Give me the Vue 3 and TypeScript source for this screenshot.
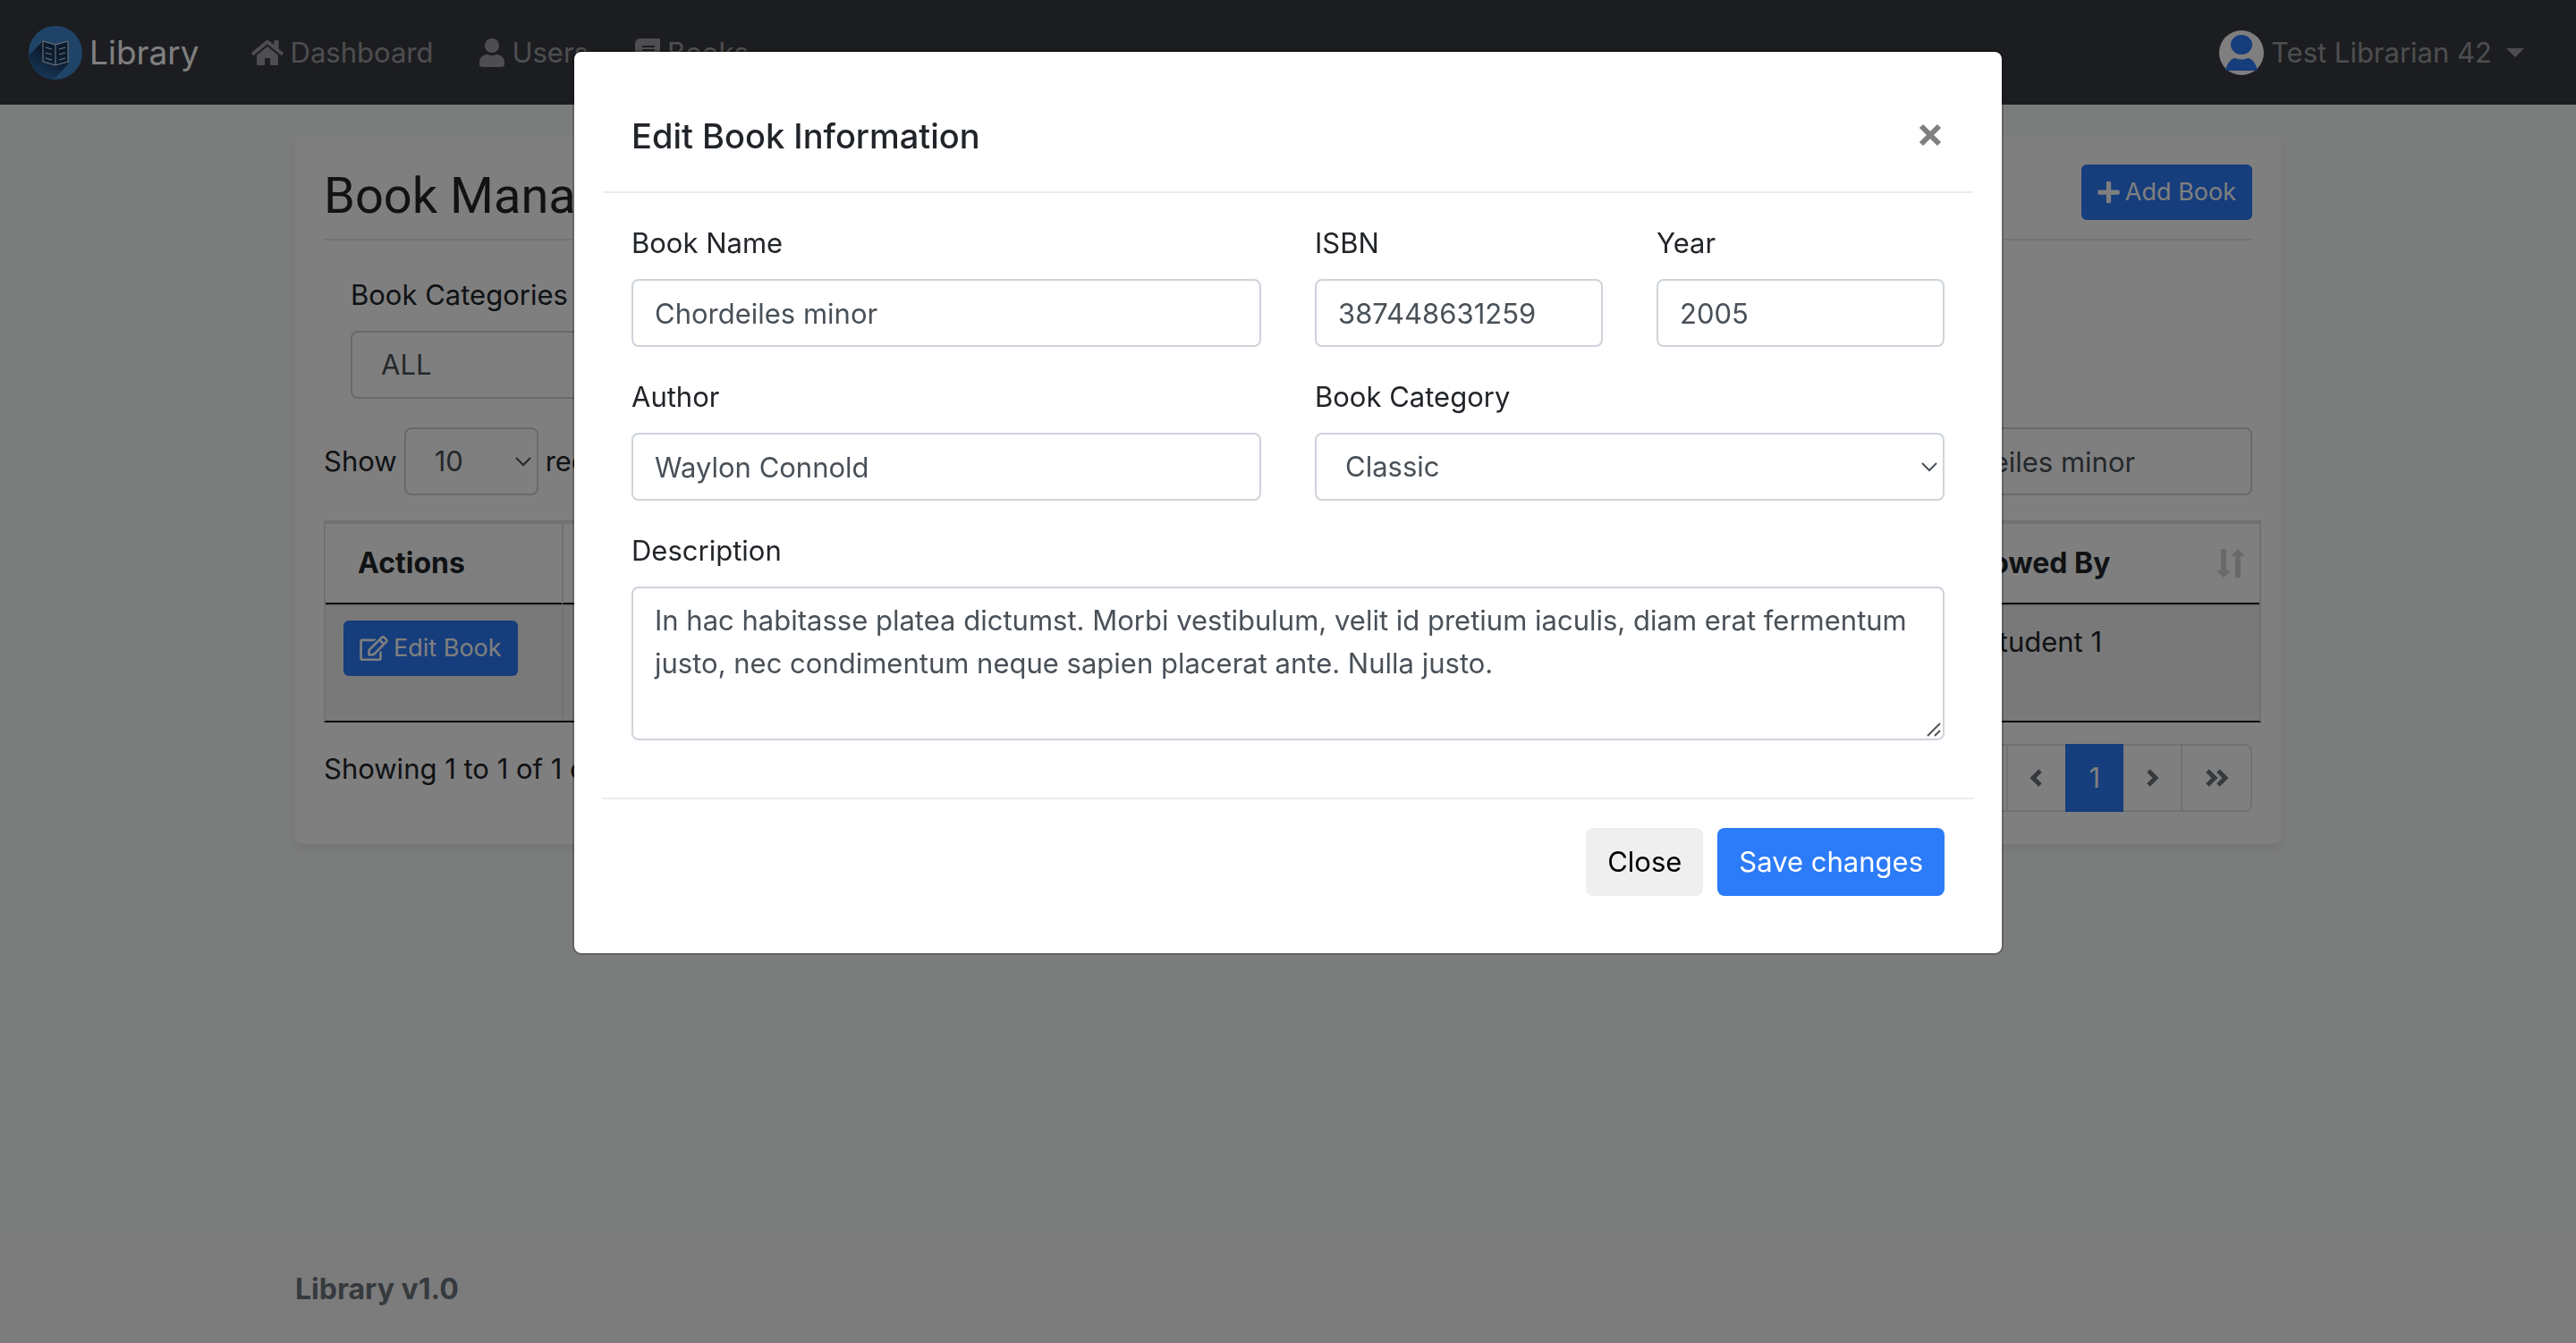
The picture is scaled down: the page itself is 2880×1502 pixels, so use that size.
<script setup lang="ts">
import { ref } from 'vue'

interface NavItem {
  label: string
  viewBox: string
  width: number
  path: string
}

const navItems: NavItem[] = [
  {
    label: 'Dashboard',
    viewBox: '0 0 576 512',
    width: 36,
    path: 'M280.37 148.26L96 300.11V464a16 16 0 0 0 16 16l112.06-.29a16 16 0 0 0 15.92-16V368a16 16 0 0 1 16-16h64a16 16 0 0 1 16 16v95.64a16 16 0 0 0 16 16.05L464 480a16 16 0 0 0 16-16V300L295.67 148.26a12.19 12.19 0 0 0-15.3 0zM571.6 251.47L488 182.56V44.05a12 12 0 0 0-12-12h-56a12 12 0 0 0-12 12v72.61L318.47 43a48 48 0 0 0-61 0L4.34 251.47a12 12 0 0 0-1.6 16.9l25.5 31A12 12 0 0 0 45.15 301l235.22-193.74a12.19 12.19 0 0 1 15.3 0L530.9 301a12 12 0 0 0 16.9-1.6l25.5-31a12 12 0 0 0-1.7-16.93z',
  },
  {
    label: 'Users',
    viewBox: '0 0 448 512',
    width: 28,
    path: 'M224 256c70.7 0 128-57.3 128-128S294.7 0 224 0 96 57.3 96 128s57.3 128 128 128zm89.6 32h-16.7c-22.2 10.2-46.9 16-72.9 16s-50.6-5.8-72.9-16h-16.7C60.2 288 0 348.2 0 422.4V464c0 26.5 21.5 48 48 48h352c26.5 0 48-21.5 48-48v-41.6c0-74.2-60.2-134.4-134.4-134.4z',
  },
  {
    label: 'Books',
    viewBox: '0 0 448 512',
    width: 28,
    path: 'M448 360V24c0-13.3-10.7-24-24-24H96C43 0 0 43 0 96v320c0 53 43 96 96 96h328c13.3 0 24-10.7 24-24v-16c0-7.5-3.5-14.3-8.9-18.7-4.2-15.4-4.2-59.3 0-74.7 5.4-4.3 8.9-11.1 8.9-18.6zM128 134c0-3.3 2.7-6 6-6h212c3.3 0 6 2.7 6 6v20c0 3.3-2.7 6-6 6H134c-3.3 0-6-2.7-6-6v-20zm0 64c0-3.3 2.7-6 6-6h212c3.3 0 6 2.7 6 6v20c0 3.3-2.7 6-6 6H134c-3.3 0-6-2.7-6-6v-20zm253.4 250H96c-17.7 0-32-14.3-32-32 0-17.6 14.4-32 32-32h285.4c-1.9 17.1-1.9 46.9 0 64z',
  },
]

const book = ref({
  name: 'Chordeiles minor',
  isbn: '387448631259',
  year: '2005',
  author: 'Waylon Connold',
  category: 'Classic',
  description:
    'In hac habitasse platea dictumst. Morbi vestibulum, velit id pretium iaculis, diam erat fermentum justo, nec condimentum neque sapien placerat ante. Nulla justo.',
})
const search = ref('Chordeiles minor')
const filter = ref('ALL')
const pageSize = ref('10')
</script>

<template>
  <div class="page">
    <header class="navbar">
      <a class="brand" href="#">
        <svg class="logo" viewBox="0 0 60 60" aria-hidden="true">
          <defs>
            <clipPath id="logo-disc"><circle cx="30" cy="30" r="30" /></clipPath>
            <linearGradient id="logo-shade" x1="0.6" y1="0.3" x2="0.3" y2="0.9">
              <stop offset="0" stop-color="#17375c" />
              <stop offset="1" stop-color="#3375b8" />
            </linearGradient>
          </defs>
          <circle cx="30" cy="30" r="30" fill="#3e88d0" />
          <g clip-path="url(#logo-disc)">
            <path d="M16 17L-4 37V64H24L44 43V17L30 21Z" fill="url(#logo-shade)" />
          </g>
          <g fill="none" stroke="#eef3f8" stroke-width="1">
            <path d="M16 17l14 4 14-4v23l-14 4-14-4zM30 21v23" />
            <path d="M19 24l7 2M19 30l7 2M19 36l7 2M34 26l7-2M34 32l7-2M34 38l7-2" />
          </g>
        </svg>
        <span>Library</span>
      </a>
      <nav class="nav-links">
        <a v-for="item in navItems" :key="item.label" href="#">
          <svg :viewBox="item.viewBox" :width="item.width" height="32" aria-hidden="true"><path :d="item.path" /></svg>
          <span>{{ item.label }}</span>
        </a>
      </nav>
      <a class="account" href="#">
        <svg class="avatar" viewBox="0 0 50 50" aria-hidden="true">
          <circle cx="25" cy="25" r="25" fill="#fff" />
          <ellipse cx="25" cy="16" rx="12" ry="11" fill="#2c7bf8" />
          <path d="M7 45C9 36 14 31 18 31q7 3 14 0c4 0 9 5 11 14z" fill="#2c7bf8" />
        </svg>
        <span>Test Librarian 42</span>
        <span class="caret"></span>
      </a>
    </header>

    <main class="container">
      <section class="card">
        <div class="card-head">
          <h1>Book Management</h1>
          <button class="btn btn-primary btn-sm" type="button">
            <svg viewBox="0 0 448 512" width="25" height="28" aria-hidden="true">
              <path d="M416 208H272V64c0-17.67-14.33-32-32-32h-32c-17.67 0-32 14.33-32 32v144H32c-17.67 0-32 14.33-32 32v32c0 17.67 14.33 32 32 32h144v144c0 17.67 14.33 32 32 32h32c17.67 0 32-14.33 32-32V304h144c17.67 0 32-14.33 32-32v-32c0-17.67-14.33-32-32-32z" />
            </svg>
            <span>Add Book</span>
          </button>
        </div>

        <div class="filter field">
          <label for="filter">Book Categories</label>
          <div class="select">
            <select id="filter" v-model="filter" class="control"><option>ALL</option></select>
            <svg viewBox="0 0 18 11" aria-hidden="true"><path d="M1 1l8 8 8-8" /></svg>
          </div>
        </div>

        <div class="toolbar">
          <label class="length">
            <span>Show</span>
            <span class="select">
              <select v-model="pageSize" class="control"><option>10</option></select>
              <svg viewBox="0 0 18 11" aria-hidden="true"><path d="M1 1l8 8 8-8" /></svg>
            </span>
            <span>records</span>
          </label>
          <input v-model="search" class="control search" type="text" aria-label="Search" />
        </div>

        <table>
          <thead>
            <tr>
              <th class="col-actions">Actions</th>
              <th></th>
              <th class="col-borrower">
                <div class="th-sort">
                  <span>Borrowed By</span>
                  <svg viewBox="0 0 32 32" aria-hidden="true">
                    <path d="M5 0h6v24h5l-8 8-8-8h5zM21 32V8h-5l8-8 8 8h-5v24z" />
                  </svg>
                </div>
              </th>
            </tr>
          </thead>
          <tbody>
            <tr>
              <td>
                <button class="btn btn-primary btn-sm" type="button">
                  <svg viewBox="0 0 576 512" width="32" height="28" aria-hidden="true">
                    <path d="M402.3 344.9l32-32c5-5 13.7-1.5 13.7 5.7V464c0 26.5-21.5 48-48 48H48c-26.5 0-48-21.5-48-48V112c0-26.5 21.5-48 48-48h273.5c7.1 0 10.7 8.6 5.7 13.7l-32 32c-1.5 1.5-3.5 2.3-5.7 2.3H48v352h352V350.5c0-2.1.8-4.1 2.3-5.6zm156.6-201.8L296.3 405.7l-90.4 10c-26.2 2.9-48.5-19.2-45.6-45.6l10-90.4L432.9 17.1c22.9-22.9 59.9-22.9 82.7 0l43.2 43.2c22.9 22.9 22.9 60 .1 82.8zM460.1 174L402 115.9 216.2 301.8l-7.3 65.3 65.3-7.3L460.1 174zm64.8-79.7l-43.2-43.2c-4.1-4.1-10.8-4.1-14.8 0L436 82l58.1 58.1 30.9-30.9c4-4.2 4-10.8-.1-14.9z" />
                  </svg>
                  <span>Edit Book</span>
                </button>
              </td>
              <td></td>
              <td>Test Student 1</td>
            </tr>
          </tbody>
        </table>

        <div class="table-foot">
          <p>Showing 1 to 1 of 1 entries</p>
          <div class="pager">
            <button type="button" aria-label="First page">
              <svg viewBox="0 0 28 22" width="28" height="22"><path d="M12 3l-8 8 8 8M24 3l-8 8 8 8" /></svg>
            </button>
            <button type="button" aria-label="Previous page">
              <svg viewBox="0 0 16 22" width="16" height="22"><path d="M12 3l-8 8 8 8" /></svg>
            </button>
            <button type="button" class="current">1</button>
            <button type="button" aria-label="Next page">
              <svg viewBox="0 0 16 22" width="16" height="22"><path d="M4 3l8 8-8 8" /></svg>
            </button>
            <button type="button" aria-label="Last page">
              <svg viewBox="0 0 28 22" width="28" height="22"><path d="M4 3l8 8-8 8M16 3l8 8-8 8" /></svg>
            </button>
          </div>
        </div>
      </section>
    </main>

    <footer class="footer">
      <div class="container">Library v1.0</div>
    </footer>
  </div>

  <div class="backdrop">
    <form class="modal" role="dialog" aria-labelledby="modal-title" @submit.prevent>
      <div class="modal-head">
        <h2 id="modal-title">Edit Book Information</h2>
        <button class="close" type="button" aria-label="Close dialog">
          <svg viewBox="0 0 26 26" width="26" height="26"><path d="M3 3l20 20M23 3L3 23" /></svg>
        </button>
      </div>
      <div class="modal-body">
        <div class="field half">
          <label for="name">Book Name</label>
          <input id="name" v-model="book.name" class="control" type="text" />
        </div>
        <div class="field">
          <label for="isbn">ISBN</label>
          <input id="isbn" v-model="book.isbn" class="control" type="text" />
        </div>
        <div class="field">
          <label for="year">Year</label>
          <input id="year" v-model="book.year" class="control" type="text" />
        </div>
        <div class="field half">
          <label for="author">Author</label>
          <input id="author" v-model="book.author" class="control" type="text" />
        </div>
        <div class="field half">
          <label for="category">Book Category</label>
          <div class="select">
            <select id="category" v-model="book.category" class="control"><option>Classic</option></select>
            <svg viewBox="0 0 18 11" aria-hidden="true"><path d="M1 1l8 8 8-8" /></svg>
          </div>
        </div>
        <div class="field full">
          <label for="description">Description</label>
          <div class="area">
            <textarea id="description" v-model="book.description" class="control" rows="3"></textarea>
            <svg viewBox="0 0 16 16" aria-hidden="true"><path d="M1 15L15 1M9 15l6-6" /></svg>
          </div>
        </div>
      </div>
      <div class="modal-foot">
        <button class="btn btn-plain" type="button">Close</button>
        <button class="btn btn-primary" type="submit">Save changes</button>
      </div>
    </form>
  </div>
</template>

<style>
body {
  background: #f6fbf9;
  color: #212529;
  font: 400 31px/48px Inter, 'Liberation Sans', sans-serif;
}
</style>

<style scoped>
* {
  box-sizing: border-box;
}
h1,
h2,
p {
  margin: 0;
}
a {
  color: inherit;
  text-decoration: none;
}
button,
input,
select,
textarea {
  font: inherit;
}
svg {
  flex: none;
  fill: currentColor;
}

.page {
  display: flex;
  flex-direction: column;
  min-height: 100vh;
}
.navbar {
  display: flex;
  align-items: center;
  height: 117px;
  padding: 0 58px 0 32px;
  background: #383a40;
  color: rgba(255, 255, 255, 0.5);
}
.brand {
  display: flex;
  align-items: center;
  gap: 8px;
  color: #fff;
  font-size: 37px;
}
.logo {
  width: 60px;
  height: 60px;
}
.nav-links {
  display: flex;
  flex: 1;
  gap: 52px;
  margin-left: 58px;
}
.nav-links a,
.account {
  display: flex;
  align-items: center;
  gap: 8px;
}
.avatar {
  width: 50px;
  height: 50px;
}
.caret {
  margin-left: 8px;
  border: 10px solid transparent;
  border-top-color: currentColor;
  border-bottom: 0;
}

.container {
  width: 100%;
  max-width: 2280px;
  margin: 0 auto;
  padding: 0 30px;
}
main.container {
  flex: 1;
  padding-top: 35px;
}
.card {
  padding: 32px 32px 36px;
  border-radius: 8px;
  background: #fff;
  box-shadow: 0 4px 12px rgba(0, 0, 0, 0.08);
}
.card-head {
  display: flex;
  align-items: flex-start;
  justify-content: space-between;
  height: 85px;
  border-bottom: 2px solid #e6e6e6;
}
h1 {
  font: 400 56px/70px Roboto, sans-serif;
}

.btn {
  display: inline-flex;
  align-items: center;
  height: 76px;
  padding: 0 24px;
  border: 0;
  border-radius: 8px;
}
.btn-primary {
  background: #2c7bf8;
  color: #fff;
}
.btn-plain {
  background: #efefef;
  color: #000;
}
.btn-sm {
  gap: 6px;
  height: 62px;
  padding: 0 18px;
  border-radius: 6px;
  font-size: 27px;
}

.field {
  display: flex;
  flex-direction: column;
  gap: 16px;
}
.control {
  display: block;
  width: 100%;
  height: 76px;
  margin: 0;
  padding: 12px 24px;
  border: 2px solid #ced4da;
  border-radius: 8px;
  outline: 0;
  background: #fff;
  color: #495057;
}
.select,
.area {
  display: block;
  position: relative;
}
.select .control {
  padding-left: 32px;
  appearance: none;
}
.select svg {
  position: absolute;
  top: 33px;
  right: 8px;
  width: 18px;
  height: 11px;
  fill: none;
  stroke: #495057;
  stroke-width: 2;
  pointer-events: none;
}
.area .control {
  height: 172px;
  resize: none;
}
.area svg {
  position: absolute;
  right: 4px;
  bottom: 4px;
  width: 16px;
  height: 16px;
  stroke: #555;
  stroke-width: 2;
}

.filter {
  width: 33%;
  margin-top: 37px;
  padding-left: 30px;
}
.toolbar {
  display: flex;
  justify-content: space-between;
  margin-top: 32px;
}
.length {
  display: flex;
  align-items: center;
  gap: 8px;
}
.length .select {
  width: 150px;
}
.search {
  width: 406px;
}

table {
  width: calc(100% + 10px);
  margin-top: 28px;
  border: 2px solid #dee2e6;
  border-top-width: 4px;
  border-bottom-color: #111;
  border-collapse: separate;
  border-spacing: 0;
  table-layout: fixed;
}
th,
td {
  text-align: left;
  vertical-align: top;
}
th + th,
td + td {
  border-left: 2px solid #dee2e6;
}
th {
  padding: 20px 16px 20px 36px;
  border-bottom: 2px solid #111;
  font-size: 32px;
  font-weight: 700;
}
td {
  height: 130px;
  padding: 16px 20px;
  border-top: 2px solid #dee2e6;
  background: #f2f2f2;
}
.col-actions {
  width: 264px;
}
.col-borrower {
  width: 404px;
}
.th-sort {
  display: flex;
  align-items: center;
  justify-content: space-between;
}
.th-sort svg {
  width: 32px;
  height: 32px;
  fill: #d2d2d2;
}

.table-foot {
  display: flex;
  justify-content: space-between;
  margin-top: 24px;
}
.table-foot p {
  padding-top: 4px;
}
.pager {
  display: flex;
}
.pager button {
  display: flex;
  align-items: center;
  height: 76px;
  margin-left: -2px;
  padding: 0 24px;
  border: 2px solid #dee2e6;
  background: #fff;
  color: #6c757d;
}
.pager button:first-child {
  border-radius: 8px 0 0 8px;
}
.pager button:last-child {
  border-radius: 0 8px 8px 0;
}
.pager .current {
  position: relative;
  border-color: #2c7bf8;
  background: #2c7bf8;
  color: #fff;
}
.pager svg {
  fill: none;
  stroke: currentColor;
  stroke-width: 5;
}

.footer {
  padding: 36px 0;
  background: #f8f8f8;
  color: #6c757d;
  font-size: 32px;
  font-weight: 700;
}

.backdrop {
  position: fixed;
  inset: 0;
  overflow: auto;
  padding: 56px 32px;
  background: rgba(0, 0, 0, 0.5);
}
.modal {
  max-width: 1600px;
  margin: 0 auto;
  padding: 32px;
  border: 2px solid rgba(0, 0, 0, 0.2);
  border-radius: 10px;
  background: #fff;
  background-clip: padding-box;
}
.modal-head {
  display: flex;
  justify-content: space-between;
  padding: 32px;
  border-bottom: 2px solid #e9ecef;
}
h2 {
  font-size: 38px;
  font-weight: 500;
  line-height: 60px;
}
.close {
  display: flex;
  height: 60px;
  padding: 16px 3px;
  border: 0;
  background: none;
  color: #7f7f7f;
}
.close svg {
  stroke: currentColor;
  stroke-width: 6;
}
.modal-body {
  display: grid;
  grid-template-columns: repeat(4, 1fr);
  gap: 32px 60px;
  padding: 32px 32px 64px;
}
.half {
  grid-column: span 2;
}
.full {
  grid-column: 1 / -1;
}
.modal-body .field {
  min-width: 0;
}
.modal-foot {
  display: flex;
  justify-content: flex-end;
  gap: 16px;
  padding: 32px;
  border-top: 2px solid #e9ecef;
}
</style>
